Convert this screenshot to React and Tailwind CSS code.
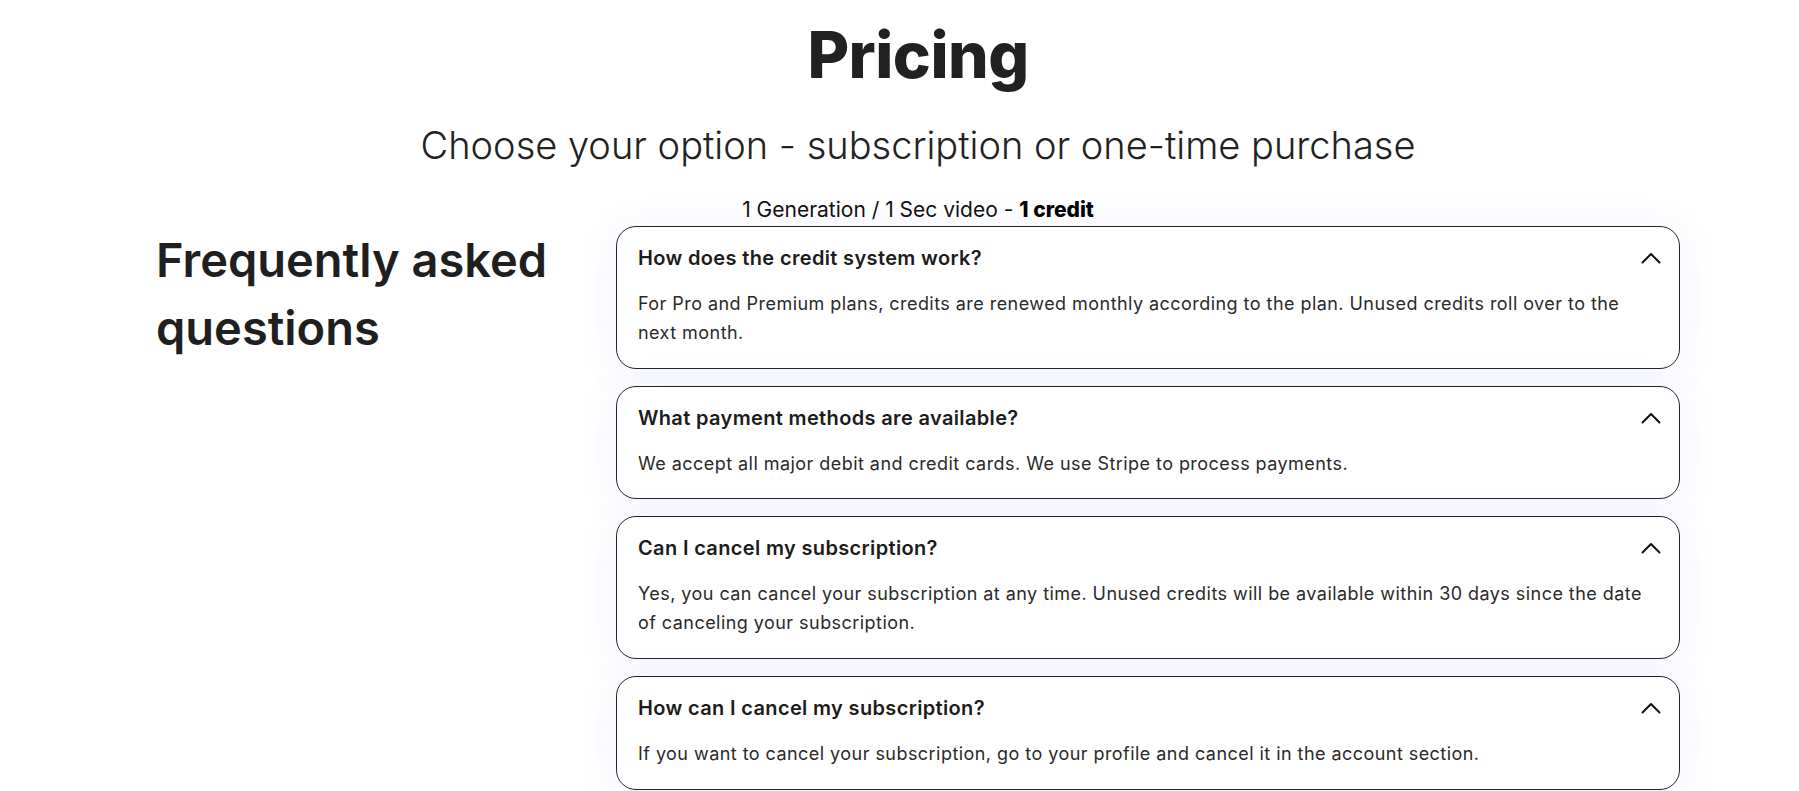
import React from 'react';

const faqs = [
    {
        q: 'How does the credit system work?',
        a: 'For Pro and Premium plans, credits are renewed monthly according to the plan. Unused credits roll over to the next month.',
    },
    {
        q: 'What payment methods are available?',
        a: 'We accept all major debit and credit cards. We use Stripe to process payments.',
    },
    {
        q: 'Can I cancel my subscription?',
        a: 'Yes, you can cancel your subscription at any time. Unused credits will be available within 30 days since the date of canceling your subscription.',
    },
    {
        q: 'How can I cancel my subscription?',
        a: 'If you want to cancel your subscription, go to your profile and cancel it in the account section.',
    },
];

function ChevronUp() {
    return (
        <svg width="20" height="12" viewBox="0 0 20 12" fill="none" className="shrink-0">
            <polyline points="1.5,10.5 10,2 18.5,10.5" stroke="#111" strokeWidth="2" strokeLinecap="round" strokeLinejoin="round" />
        </svg>
    );
}

export default function App() {
    return (
        <div className="min-h-screen bg-white text-[#1f1f1f] font-['Inter',sans-serif]">
            <div className="flex flex-col items-center pl-[37px] pt-[23px]">
                <h1 className="text-[64px] leading-[64px] font-extrabold tracking-[-0.5px] text-[#212121]">Pricing</h1>
                <p className="mt-[37px] text-[38px] leading-[42px] font-light text-[#222]">
                    Choose your option - subscription or one-time purchase
                </p>
                <p className="mt-[30px] text-[21px] leading-[28px] text-[#111]">
                    1 Generation / 1 Sec video - <span className="font-extrabold text-black">1 credit</span>
                </p>
            </div>

            <div className="flex items-start pl-[156px] pt-[2px]">
                <h2 className="w-[460px] shrink-0 text-[47px] leading-[68px] font-semibold text-[#1f1f1f]">
                    Frequently asked
                    <br />
                    questions
                </h2>

                <div className="w-[1064px] flex flex-col gap-[17px]">
                    {faqs.map((f, i) => (
                        <div
                            key={i}
                            className="bg-white border border-[#262626] rounded-[20px] pl-[21px] pr-[18px] pt-[17px] pb-[20px] shadow-[0_4px_40px_rgba(100,100,240,0.09)]"
                        >
                            <div className="flex items-center justify-between">
                                <h3 className="text-[20px] leading-[28px] font-semibold tracking-[0.35px] text-[#1c1c1c]">{f.q}</h3>
                                <ChevronUp />
                            </div>
                            <p className="mt-[18px] pr-[6px] text-[18px] leading-[28.8px] tracking-[0.45px] text-[#2a2a2a]">{f.a}</p>
                        </div>
                    ))}
                </div>
            </div>
        </div>
    );
}
